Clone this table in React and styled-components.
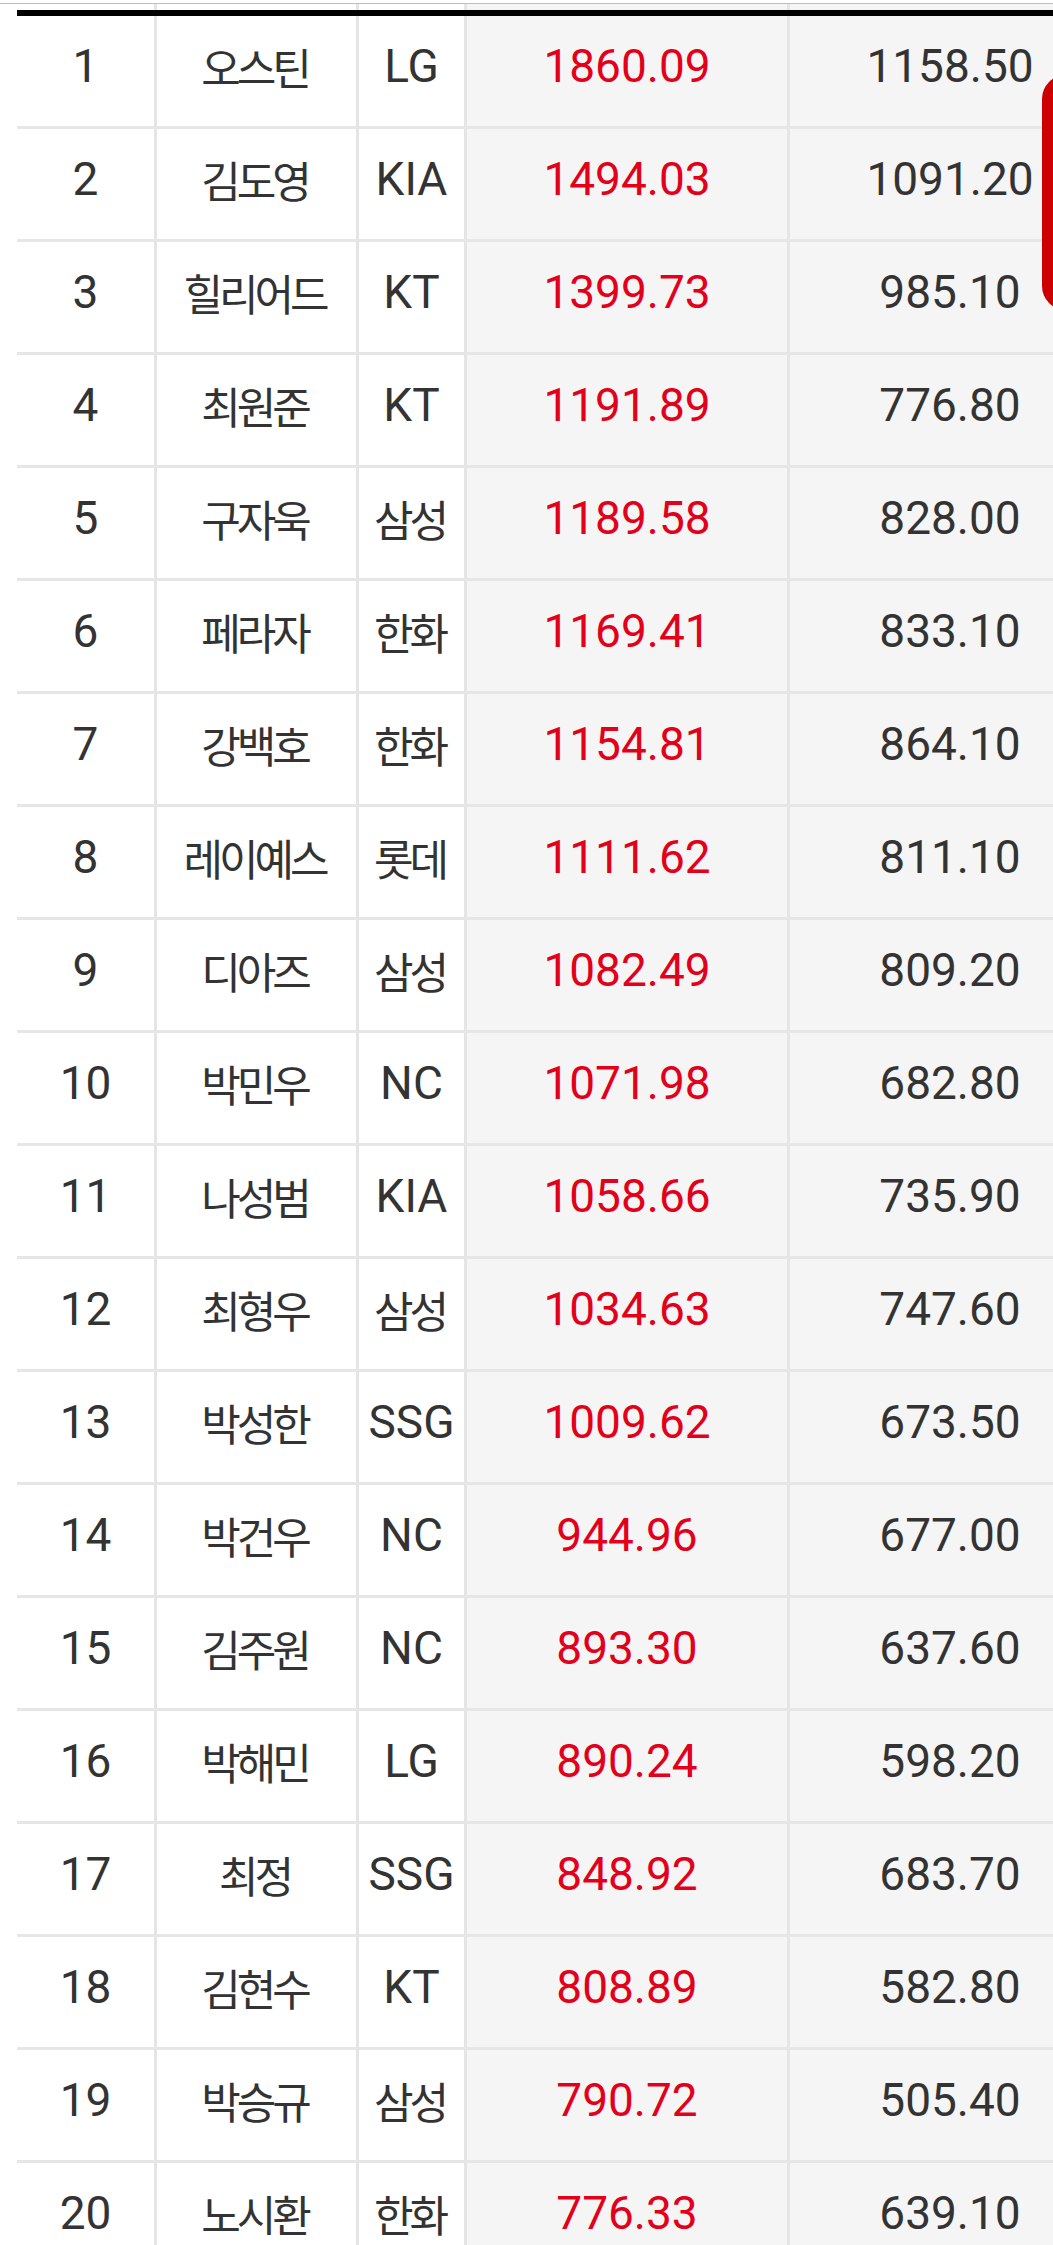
import React from "react";
import styled, { createGlobalStyle } from "styled-components";

const Global = createGlobalStyle`
  html, body {
    margin: 0;
    padding: 0;
    overflow: hidden;
    background: #ffffff;
  }
  body {
    font-family: Roboto, "Noto Sans CJK KR", sans-serif;
  }
`;

const Page = styled.div`
  position: relative;
  width: 1053px;
  height: 2245px;
  overflow: hidden;
  background: #fff;
  padding-top: 3px;
  box-sizing: border-box;
`;

const TopRule = styled.div`
  height: 1px;
  background: #bdbdbd;
`;

const Table = styled.div`
  margin-left: 17px;
  width: 1093px;
`;

const COLS = "137px 202px 108px 323px 323px";

const Strip = styled.div`
  display: grid;
  grid-template-columns: ${COLS};
  height: 6px;
  border-bottom: 6px solid #000;
`;

const StripCell = styled.div`
  background: ${(p) => (p.$shade ? "#f5f5f5" : "#fff")};
  border-left: ${(p) => (p.$first ? "none" : "3px solid #e5e5e5")};
`;

const Row = styled.div`
  display: grid;
  grid-template-columns: ${COLS};
  height: 113px;
  box-sizing: border-box;
  border-top: ${(p) => (p.$first ? "none" : "3px solid #e6e6e6")};
  ${(p) => (p.$first ? "height: 110px;" : "")}
`;

const Cell = styled.div`
  box-sizing: border-box;
  display: flex;
  align-items: center;
  justify-content: center;
  padding-bottom: 11px;
  border-left: ${(p) => (p.$first ? "none" : "3px solid #e5e5e5")};
  background: ${(p) => (p.$shade ? "#f5f5f5" : "#fff")};
  color: ${(p) => (p.$red ? "#e2001a" : "#333333")};
  font-family: Roboto, "Noto Sans CJK KR", sans-serif;
  font-size: 46px;
  line-height: 54px;
  white-space: nowrap;
`;

const Hangul = styled.span`
  font-family: "Noto Sans CJK KR", sans-serif;
  font-size: 43px;
  letter-spacing: -4px;
  margin-right: 4px;
`;

const FloatTab = styled.div`
  position: absolute;
  left: 1042px;
  top: 75px;
  width: 60px;
  height: 235px;
  background: #cc0000;
  border-radius: 24px;
`;

const data = [
  [1, "오스틴", "LG", "1860.09", "1158.50"],
  [2, "김도영", "KIA", "1494.03", "1091.20"],
  [3, "힐리어드", "KT", "1399.73", "985.10"],
  [4, "최원준", "KT", "1191.89", "776.80"],
  [5, "구자욱", "삼성", "1189.58", "828.00"],
  [6, "페라자", "한화", "1169.41", "833.10"],
  [7, "강백호", "한화", "1154.81", "864.10"],
  [8, "레이예스", "롯데", "1111.62", "811.10"],
  [9, "디아즈", "삼성", "1082.49", "809.20"],
  [10, "박민우", "NC", "1071.98", "682.80"],
  [11, "나성범", "KIA", "1058.66", "735.90"],
  [12, "최형우", "삼성", "1034.63", "747.60"],
  [13, "박성한", "SSG", "1009.62", "673.50"],
  [14, "박건우", "NC", "944.96", "677.00"],
  [15, "김주원", "NC", "893.30", "637.60"],
  [16, "박해민", "LG", "890.24", "598.20"],
  [17, "최정", "SSG", "848.92", "683.70"],
  [18, "김현수", "KT", "808.89", "582.80"],
  [19, "박승규", "삼성", "790.72", "505.40"],
  [20, "노시환", "한화", "776.33", "639.10"],
];

const isHangul = (s) => /[\uAC00-\uD7A3]/.test(s);

const Text = ({ value }) =>
  isHangul(String(value)) ? <Hangul>{value}</Hangul> : <>{value}</>;

export default function App() {
  return (
    <>
      <Global />
      <Page>
        <TopRule />
        <Table>
          <Strip>
            <StripCell $first />
            <StripCell />
            <StripCell />
            <StripCell $shade />
            <StripCell $shade />
          </Strip>
          {data.map(([rank, name, team, a, b], i) => (
            <Row key={rank} $first={i === 0}>
              <Cell $first>{rank}</Cell>
              <Cell>
                <Text value={name} />
              </Cell>
              <Cell>
                <Text value={team} />
              </Cell>
              <Cell $shade $red>
                {a}
              </Cell>
              <Cell $shade>{b}</Cell>
            </Row>
          ))}
        </Table>
        <FloatTab />
      </Page>
    </>
  );
}
